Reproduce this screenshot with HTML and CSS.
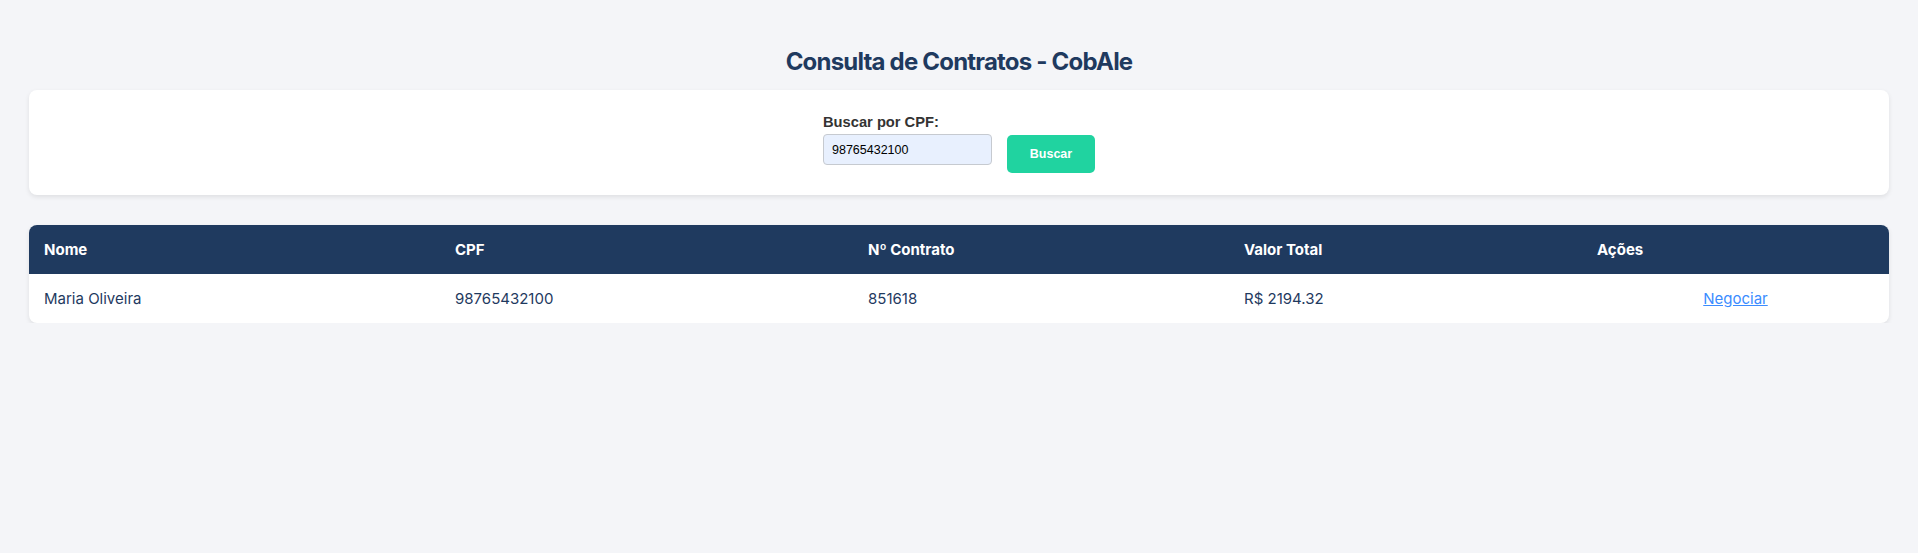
FILE: index.html
```html
<!DOCTYPE html>
<html lang="pt-BR">
<head>
<meta charset="utf-8">
<title>Consulta de Contratos - CobAle</title>
<link rel="stylesheet" href="styles.css">
</head>
<body>
<main class="page">
  <h1 class="title">Consulta de Contratos - CobAle</h1>
  <section class="card search-card">
    <form class="search-form">
      <div class="field">
        <label class="field-label" for="cpf">Buscar por CPF:</label>
        <input class="field-input" id="cpf" type="text" value="98765432100">
      </div>
      <button class="btn" type="button">Buscar</button>
    </form>
  </section>
  <section class="card table-card">
    <table class="results">
      <colgroup>
        <col class="c-nome"><col class="c-cpf"><col class="c-contrato"><col class="c-valor"><col class="c-acoes">
      </colgroup>
      <thead>
        <tr><th>Nome</th><th>CPF</th><th>Nº Contrato</th><th>Valor Total</th><th>Ações</th></tr>
      </thead>
      <tbody>
        <tr><td>Maria Oliveira</td><td>98765432100</td><td>851618</td><td>R$ 2194.32</td><td class="action"><a href="#" class="link">Negociar</a></td></tr>
      </tbody>
    </table>
  </section>
</main>
</body>
</html>
```
FILE: styles.css
```css
* { box-sizing: border-box; }
html, body { margin: 0; padding: 0; }
body {
  background: #f4f5f8;
  font-family: Inter, "Liberation Sans", sans-serif;
  color: #1f3a5f;
}
.page {
  padding: 47px 29px 0;
}
.title {
  margin: 0 0 14px;
  font-size: 24px;
  line-height: 29px;
  font-weight: 700;
  letter-spacing: -0.8px;
  text-align: center;
  color: #1f3a5f;
}
.card {
  background: #fff;
  border-radius: 8px;
  box-shadow: 0 2px 5px rgba(0, 0, 0, 0.09);
}
.search-card {
  padding: 24px 20px 22px;
}
.search-form {
  display: flex;
  justify-content: center;
  align-items: flex-end;
  gap: 15px;
}
.field {
  display: flex;
  flex-direction: column;
  align-items: flex-start;
}
.field-label {
  font-family: "Liberation Sans", Arial, sans-serif;
  font-weight: 700;
  font-size: 14.7px;
  line-height: 17px;
  color: #333;
  margin-bottom: 3px;
}
.field-input {
  width: 169px;
  height: 31px;
  margin: 0 0 8px;
  padding: 0 8px;
  border: 1px solid #c6cad0;
  border-radius: 4px;
  background: #e8f0fe;
  font-family: "Liberation Sans", Arial, sans-serif;
  font-size: 12.5px;
  color: #000;
}
.btn {
  width: 88px;
  height: 38px;
  border: 0;
  border-radius: 5px;
  background: #20d3a0;
  color: #fff;
  font-family: "Liberation Sans", Arial, sans-serif;
  font-weight: 700;
  font-size: 12.5px;
}
.table-card {
  margin-top: 30px;
  overflow: hidden;
}
.results {
  width: 100%;
  border-collapse: collapse;
  table-layout: fixed;
}
.c-nome { width: 411px; }
.c-cpf { width: 413px; }
.c-contrato { width: 376px; }
.c-valor { width: 353px; }
.c-acoes { width: 307px; }
.results th {
  background: #1f3a5f;
  color: #fff;
  font-weight: 700;
  font-size: 15px;
  line-height: 19px;
  padding: 15px;
  text-align: left;
}
.results td {
  font-size: 15px;
  line-height: 19px;
  padding: 15px;
  color: #1f3a5f;
}
.results td.action { text-align: center; }
.link {
  color: #3b8cff;
  text-decoration: underline;
}
```
